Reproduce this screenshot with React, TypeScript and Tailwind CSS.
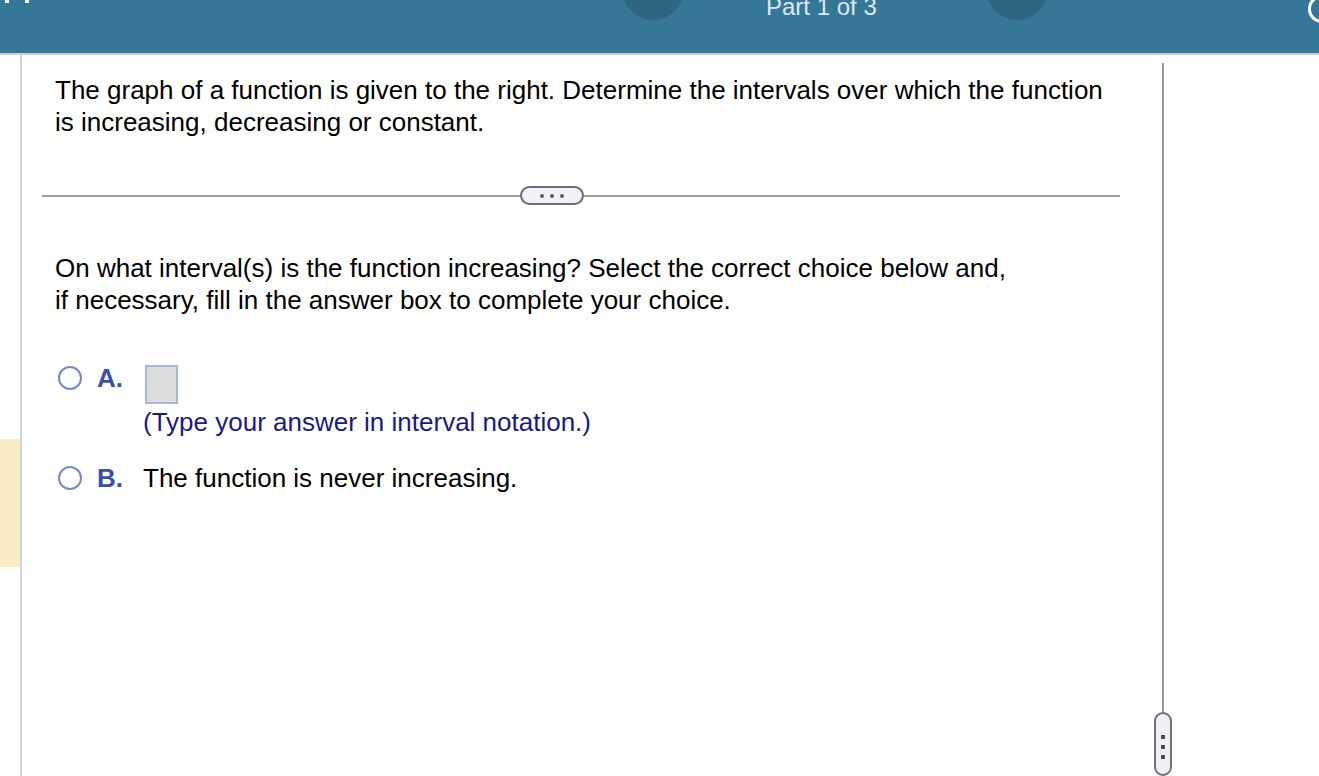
import React from "react";

function Radio() {
  return <div className="w-[24px] h-[24px] rounded-full border-2 border-[#7a87c7] bg-white shrink-0" />;
}

function Header() {
  return (
    <div className="h-[55px] shrink-0 bg-[#367696] border-b-2 border-[#c6cfd9] flex items-start overflow-hidden">
      <div className="ml-[5px] flex gap-[16px]">
        <div className="w-[4px] h-[3px] bg-white" />
        <div className="w-[4px] h-[3px] bg-white" />
      </div>
      <div className="ml-[593px] -mt-[42px] w-[62px] h-[62px] rounded-full bg-[#2e6682] shrink-0" />
      <div className="ml-[82px] -mt-[5px] w-[111px] text-[24px] leading-[24px] text-[#dce9f2] whitespace-nowrap shrink-0">
        Part 1 of 3
      </div>
      <div className="ml-[109px] -mt-[42px] w-[62px] h-[62px] rounded-full bg-[#2e6682] shrink-0" />
      <div className="ml-auto -mt-[5px] -mr-[17px] w-[28px] h-[28px] rounded-full border-[3px] border-white shrink-0" />
    </div>
  );
}

function Separator() {
  return (
    <div className="mt-[48px] ml-[20px] flex items-center h-[19px]">
      <div className="w-[478px] h-[2px] bg-[#9a9da5]" />
      <div className="w-[64px] h-[19px] rounded-full border-2 border-[#6b6f78] bg-[#f0f2f5] flex items-center justify-center gap-[6px] shrink-0">
        <div className="w-[4px] h-[4px] rounded-full bg-[#5a5d66]" />
        <div className="w-[4px] h-[4px] rounded-full bg-[#5a5d66]" />
        <div className="w-[4px] h-[4px] rounded-full bg-[#5a5d66]" />
      </div>
      <div className="w-[536px] h-[2px] bg-[#9a9da5]" />
    </div>
  );
}

export default function App() {
  return (
    <div
      className="w-[1319px] h-[776px] overflow-hidden flex flex-col bg-white text-black"
      style={{ fontFamily: '"Liberation Sans", Arial, sans-serif' }}
    >
      <Header />
      <div className="flex-1 flex min-h-0 overflow-hidden">
        {/* left strip */}
        <div className="w-[20px] shrink-0 flex flex-col">
          <div className="mt-[384px] h-[128px] bg-[#f9ecc7]" />
        </div>
        <div className="w-[2px] shrink-0 bg-[#d0d4dc]" />

        {/* main */}
        <div className="flex-1 flex flex-col text-[26px] leading-[32px]">
          <div className="mt-[19px] ml-[33px] whitespace-nowrap">
            <div>The graph of a function is given to the right. Determine the intervals over which the function</div>
            <div>is increasing, decreasing or constant.</div>
          </div>

          <Separator />

          <div className="mt-[47px] ml-[33px] whitespace-nowrap">
            <div>On what interval(s) is the function increasing? Select the correct choice below and,</div>
            <div>if necessary, fill in the answer box to complete your choice.</div>
          </div>

          <div className="mt-[49px] ml-[36px] flex items-start">
            <div className="mt-[1px]">
              <Radio />
            </div>
            <div className="ml-[15px] w-[46px] font-bold text-[#3c4ea6] leading-[26px]">A.</div>
            <div className="ml-[2px] w-[33px] h-[39px] bg-[#dcdcdc] border-2 border-[#a8b6da]" />
          </div>
          <div className="mt-[2px] ml-[121px] text-[#1b1b7c] whitespace-nowrap">(Type your answer in interval notation.)</div>

          <div className="mt-[24px] ml-[36px] flex items-center h-[32px] whitespace-nowrap">
            <Radio />
            <div className="ml-[15px] w-[46px] font-bold text-[#3c4ea6]">B.</div>
            <div>The function is never increasing.</div>
          </div>
        </div>

        {/* divider */}
        <div className="w-[18px] shrink-0 flex flex-col items-center">
          <div className="mt-[8px] flex-1 w-[2px] bg-[#959aa4]" />
          <div className="h-[64px] w-[18px] shrink-0 rounded-full border-2 border-[#6e727b] bg-[#eef0f4] flex flex-col items-center pt-[21px] gap-[6px]">
            <div className="w-[4px] h-[4px] bg-[#4a4d55]" />
            <div className="w-[4px] h-[4px] bg-[#4a4d55]" />
            <div className="w-[4px] h-[4px] bg-[#4a4d55]" />
          </div>
        </div>
        <div className="w-[147px] shrink-0" />
      </div>
    </div>
  );
}
